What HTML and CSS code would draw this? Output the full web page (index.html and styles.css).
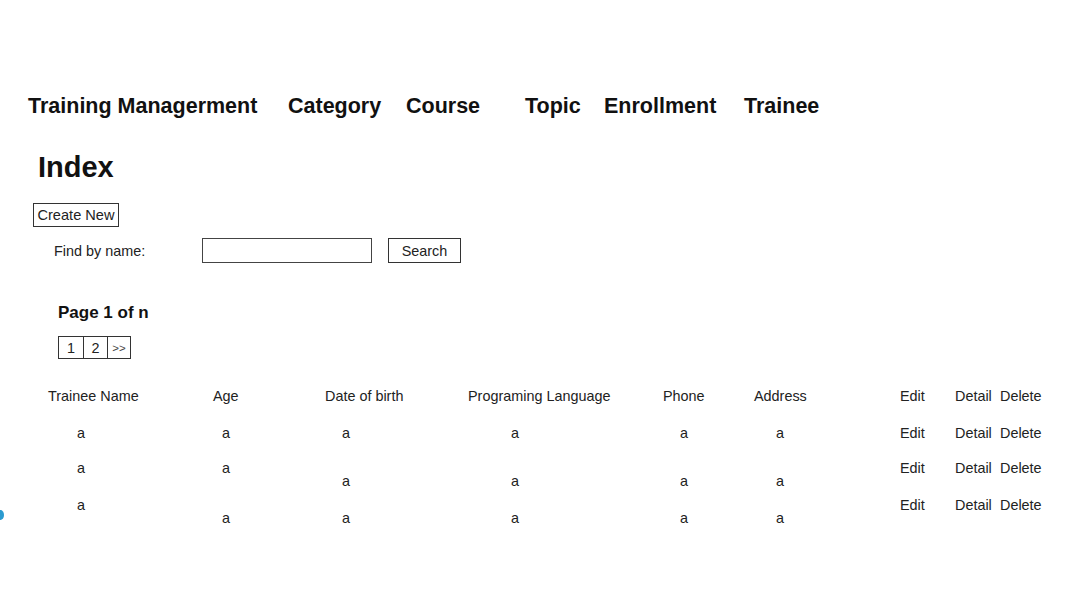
FILE: index.html
```html
<!DOCTYPE html>
<html>
<head>
<meta charset="utf-8">
<title>Index</title>
<link rel="stylesheet" href="styles.css">
</head>
<body>
<span class="edge-dot"></span>
<nav class="nav">
  <a class="nav-brand">Training Managerment</a>
  <a class="nav-link">Category</a>
  <a class="nav-link">Course</a>
  <a class="nav-link">Topic</a>
  <a class="nav-link">Enrollment</a>
  <a class="nav-link">Trainee</a>
</nav>
<main class="main">
  <h1 class="title">Index</h1>
  <div class="create-row"><a class="btn">Create New</a></div>
  <form class="search">
    <label class="search-label">Find by name:</label>
    <input class="search-input" type="text">
    <button class="btn search-btn" type="button">Search</button>
  </form>
  <h3 class="page-info">Page 1 of n</h3>
  <div class="pager">
    <span class="pager-cell">1</span>
    <span class="pager-cell">2</span>
    <span class="pager-cell pager-next">&gt;&gt;</span>
  </div>
  <div class="table">
    <div class="row head">
      <span>Trainee Name</span><span>Age</span><span>Date of birth</span><span>Programing Language</span><span>Phone</span><span>Address</span><span>Edit</span><span>Detail</span><span>Delete</span>
    </div>
    <div class="row data short">
      <span class="c1">a</span><span class="c2">a</span><span class="c3">a</span><span class="c4">a</span><span class="c5">a</span><span class="c6">a</span><span>Edit</span><span>Detail</span><span>Delete</span>
    </div>
    <div class="row data">
      <span class="c1">a</span><span class="c2">a</span><span class="c3 low">a</span><span class="c4 low">a</span><span class="c5 low">a</span><span class="c6 low">a</span><span>Edit</span><span>Detail</span><span>Delete</span>
    </div>
    <div class="row data">
      <span class="c1">a</span><span class="c2 low">a</span><span class="c3 low">a</span><span class="c4 low">a</span><span class="c5 low">a</span><span class="c6 low">a</span><span>Edit</span><span>Detail</span><span>Delete</span>
    </div>
  </div>
</main>
</body>
</html>
```
FILE: styles.css
```css
* { box-sizing: border-box; }
html, body { background: #fff; }
body {
  margin: 0;
  font-family: "Liberation Sans", Arial, sans-serif;
  color: #222;
  font-size: 14.4px;
  position: relative;
  min-height: 596px;
}
.edge-dot {
  position: absolute;
  left: -3px;
  top: 510px;
  width: 7px;
  height: 10px;
  border-radius: 50%;
  background: #2b9bd0;
}
.nav {
  display: grid;
  grid-template-columns: 260px 118px 119px 79px 140px auto;
  padding: 94px 0 0 28px;
  font-size: 21.5px;
  line-height: 24px;
  font-weight: bold;
  color: #111;
}
.nav a { color: #111; text-decoration: none; white-space: nowrap; }
.main { padding-left: 33px; }
.title {
  margin: 32px 0 0 5px;
  font-size: 29px;
  line-height: 34px;
  font-weight: bold;
  color: #111;
}
.create-row { margin-top: 19px; display: flex; }
.btn {
  display: inline-flex;
  align-items: center;
  justify-content: center;
  height: 24px;
  padding: 0 3px;
  border: 1px solid #333;
  font-family: inherit;
  font-size: 14.6px;
  color: #222;
  background: #fff;
}
.create-row .btn { width: 86px; }
.search {
  display: flex;
  align-items: center;
  margin: 11px 0 0 21px;
  height: 25px;
}
.search-label { width: 148px; font-size: 14.4px; color: #222; padding-top: 1px; }
.search-input {
  width: 170px;
  height: 25px;
  border: 1px solid #444;
  margin: 0;
  padding: 0;
}
.search-btn {
  margin-left: 16px;
  width: 73px;
  height: 25px;
  font-size: 14.4px;
}
.page-info {
  margin: 40px 0 0 25px;
  font-size: 17px;
  line-height: 20px;
  font-weight: bold;
  color: #111;
}
.pager {
  display: flex;
  margin: 13px 0 0 25px;
  width: max-content;
  border: 1px solid #333;
}
.pager-cell {
  width: 24px;
  height: 21px;
  display: flex;
  align-items: center;
  justify-content: center;
  font-size: 14.4px;
  color: #222;
}
.pager-cell + .pager-cell { border-left: 1px solid #333; }
.pager-next { width: 23px; font-size: 11.5px; color: #444; }
.table { margin: 22px 0 0 15px; }
.row {
  display: grid;
  grid-template-columns: 165px 112px 143px 195px 91px 146px 55px 45px auto;
  height: 37px;
  padding: 7px 0 1px;
  align-items: start;
  line-height: 16px;
  color: #222;
}
.row.short { height: 35px; }
.row span { white-space: nowrap; }
.row .low { align-self: end; }
.data .c1 { padding-left: 29px; }
.data .c2 { padding-left: 9px; }
.data .c3 { padding-left: 17px; }
.data .c4 { padding-left: 43px; }
.data .c5 { padding-left: 17px; }
.data .c6 { padding-left: 22px; }
```
